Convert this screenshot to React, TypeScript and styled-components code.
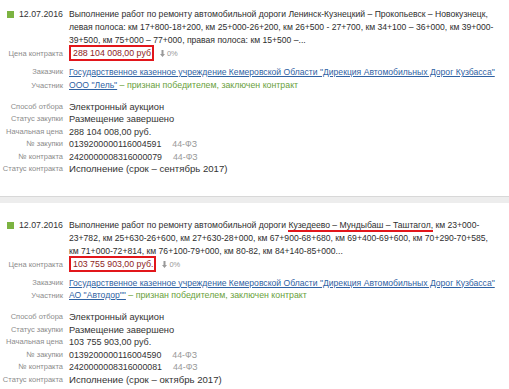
import React from 'react';
import styled, { createGlobalStyle } from 'styled-components';

const GlobalStyle = createGlobalStyle`
  html, body {
    margin: 0;
    padding: 0;
    background: #fff;
  }
  body {
    font-family: "Liberation Sans", Arial, sans-serif;
    color: #333;
  }
`;

const Block = styled.div<{ $first?: boolean }>`
  padding: ${p => (p.$first ? '8px' : '16px')} 0 20px 0;
`;

const Separator = styled.div`
  height: 6px;
  background: #ededed;
  border-top: 1px solid #d8d8d8;
`;

const Row = styled.div<{ $mt?: number; $lh?: number }>`
  display: grid;
  grid-template-columns: 63px 1fr;
  column-gap: 6px;
  align-items: start;
  margin-top: ${p => p.$mt || 0}px;
  line-height: ${p => p.$lh || 12.5}px;
  height: ${p => p.$lh || 12.5}px;
`;

const TitleRow = styled(Row)`
  height: auto;
  line-height: 13px;
`;

const Label = styled.div`
  text-align: right;
  font-size: 7.5px;
  color: #8c8c8c;
  white-space: nowrap;
`;

const DateCell = styled.div`
  text-align: right;
  font-size: 8.8px;
  color: #333;
  white-space: nowrap;
`;

const Square = styled.span`
  display: inline-block;
  width: 7px;
  height: 7px;
  margin-right: 5px;
  background: #7cb342;
  vertical-align: -1px;
`;

const Title = styled.div`
  font-size: 8.6px;
  color: #2e2e2e;
  white-space: nowrap;
`;

const Value = styled.div<{ $size?: number }>`
  font-size: ${p => p.$size || 9.3}px;
  color: #333;
  white-space: nowrap;
`;

const Price = styled.span`
  font-size: 8.8px;
  color: #8e2424;
  border: 2px solid #e2161b;
  padding: 1px 1px 1px 2px;
`;

const Change = styled.span`
  margin-left: 6px;
  font-size: 7.5px;
  color: #999;
  svg {
    margin-right: 2px;
    vertical-align: -1px;
  }
`;

const Link = styled.a`
  color: #2f62a3;
  text-decoration: underline;
  font-size: 8.6px;
`;

const Winner = styled.span`
  color: #6a9f3c;
  font-size: 8.8px;
`;

const Law = styled.span`
  margin-left: 11px;
  color: #9a9a9a;
`;

const Mark = styled.span`
  border-bottom: 2px solid #e2161b;
`;

type Item = {
  date: string;
  title: React.ReactNode[];
  price: string;
  participant: string;
  start: string;
  purchase: string;
  contract: string;
  status: string;
};

const items: Item[] = [
  {
    date: '12.07.2016',
    title: [
      'Выполнение работ по ремонту автомобильной дороги Ленинск-Кузнецкий – Прокопьевск – Новокузнецк,',
      'левая полоса: км 17+800-18+200, км 25+000-26+200, км 26+500 - 27+700, км 34+100 – 36+000, км 39+000-',
      '39+500, км 75+000 – 77+000, правая полоса: км 15+500 –...',
    ],
    price: '288 104 008,00 руб',
    participant: 'ООО "Лель"',
    start: '288 104 008,00 руб.',
    purchase: '0139200000116004591',
    contract: '2420000008316000079',
    status: 'Исполнение (срок – сентябрь 2017)',
  },
  {
    date: '12.07.2016',
    title: [
      <>
        Выполнение работ по ремонту автомобильной дороги <Mark>Кузедеево – Мундыбаш – Таштагол,</Mark> км 23+000-
      </>,
      '23+782, км 25+630-26+600, км 27+630-28+000, км 67+900-68+680, км 69+400-69+600, км 70+290-70+585,',
      'км 71+000-72+814, км 76+100-79+000, км 80-82, км 84+140-85+000...',
    ],
    price: '103 755 903,00 руб.',
    participant: 'АО "Автодор""',
    start: '103 755 903,00 руб.',
    purchase: '0139200000116004590',
    contract: '2420000008316000081',
    status: 'Исполнение (срок – октябрь 2017)',
  },
];

const DownArrow = () => (
  <svg width="5" height="7" viewBox="0 0 5 7">
    <path d="M1.5 0h2v4h1.5L2.5 7 0 4h1.5z" fill="#9a9a9a" />
  </svg>
);

const Purchase: React.FC<{ item: Item; first?: boolean }> = ({ item, first }) => (
  <Block $first={first}>
    <TitleRow>
      <DateCell>
        <Square />
        {item.date}
      </DateCell>
      <Title>
        {item.title.map((line, i) => (
          <div key={i}>{line}</div>
        ))}
      </Title>
    </TitleRow>
    <Row $lh={13}>
      <Label>Цена контракта</Label>
      <Value>
        <Price>{item.price}</Price>
        <Change>
          <DownArrow />
          0%
        </Change>
      </Value>
    </Row>
    <Row $mt={6}>
      <Label>Заказчик</Label>
      <Value>
        <Link href="#">Государственное казенное учреждение Кемеровской Области "Дирекция Автомобильных Дорог Кузбасса"</Link>
      </Value>
    </Row>
    <Row $lh={13}>
      <Label>Участник</Label>
      <Value>
        <Link href="#">{item.participant}</Link>
        <Winner> – признан победителем, заключен контракт</Winner>
      </Value>
    </Row>
    <Row $mt={9}>
      <Label>Способ отбора</Label>
      <Value>Электронный аукцион</Value>
    </Row>
    <Row>
      <Label>Статус закупки</Label>
      <Value>Размещение завершено</Value>
    </Row>
    <Row>
      <Label>Начальная цена</Label>
      <Value $size={9}>{item.start}</Value>
    </Row>
    <Row>
      <Label>№ закупки</Label>
      <Value $size={8.8}>
        {item.purchase}
        <Law>44-ФЗ</Law>
      </Value>
    </Row>
    <Row>
      <Label>№ контракта</Label>
      <Value $size={8.8}>
        {item.contract}
        <Law>44-ФЗ</Law>
      </Value>
    </Row>
    <Row>
      <Label>Статус контракта</Label>
      <Value $size={9.6}>{item.status}</Value>
    </Row>
  </Block>
);

export default function App() {
  return (
    <>
      <GlobalStyle />
      <Purchase item={items[0]} first />
      <Separator />
      <Purchase item={items[1]} />
    </>
  );
}
